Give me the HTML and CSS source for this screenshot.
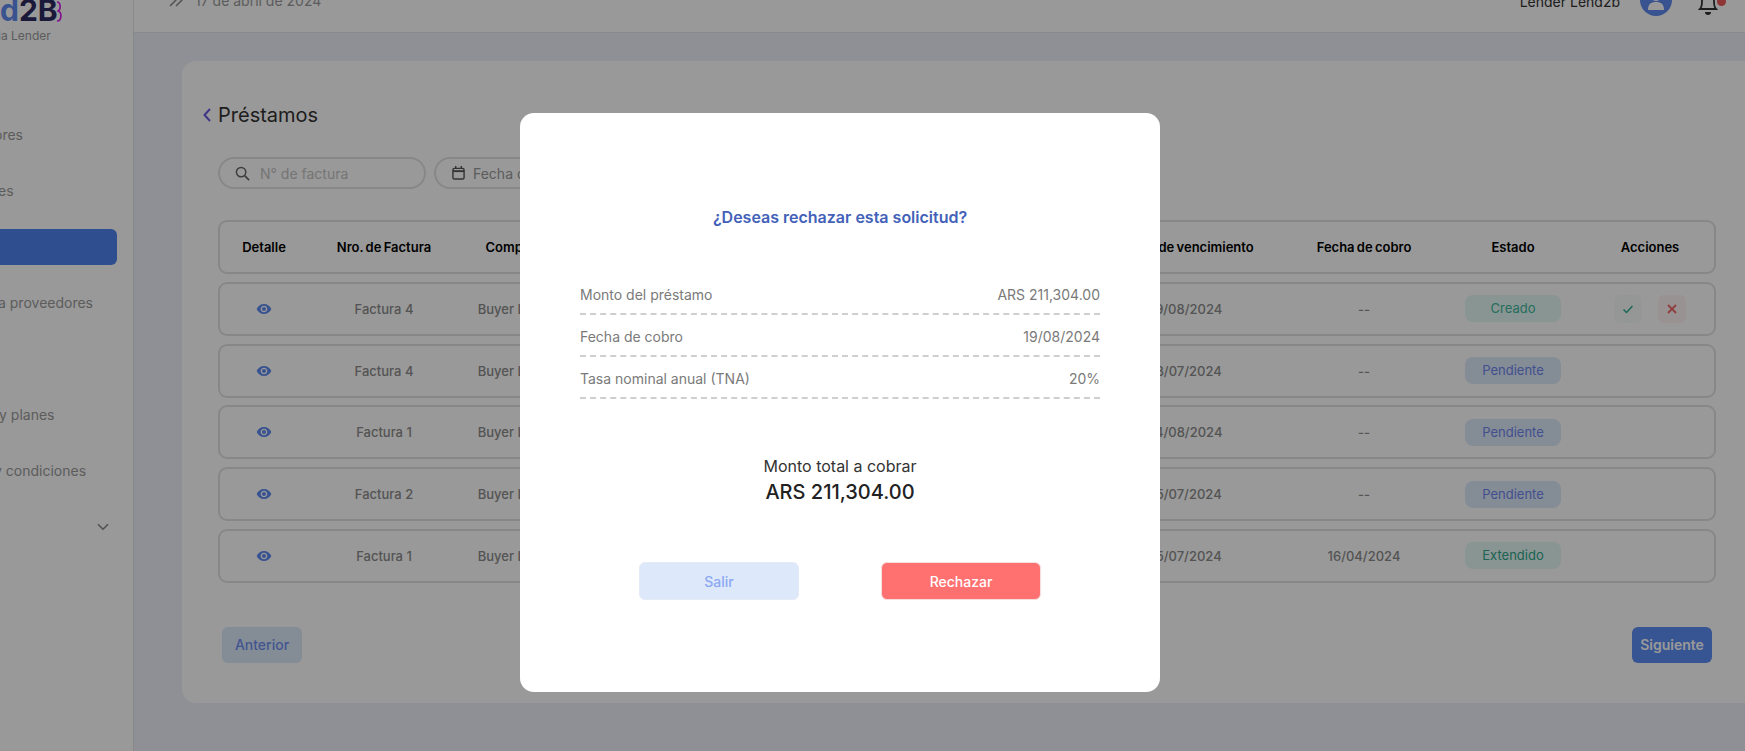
FILE: index.html
```html
<!DOCTYPE html>
<html lang="es">
<head>
<meta charset="utf-8">
<title>Préstamos</title>
<link rel="stylesheet" href="styles.css">
</head>
<body>
<div class="shell">
  <aside class="sidebar">
    <div class="logo"><span class="logo-d">d</span><span class="logo-b">2B</span><svg class="logo-arc" viewBox="0 0 5 21" width="5" height="21"><path d="M0 1c4 0 4 8 1 9c4 1 4 10-1 10" fill="none" stroke="#d21be8" stroke-width="1.6"/></svg></div>
    <div class="logo-sub">la Lender</div>
    <nav class="nav">
      <a class="nav-item nav-a">ores</a>
      <a class="nav-item nav-b">es</a>
      <a class="nav-item nav-active"></a>
      <a class="nav-item nav-b">a proveedores</a>
      <a class="nav-item"></a>
      <a class="nav-item nav-plans">y planes</a>
      <a class="nav-item nav-terms">y condiciones</a>
      <a class="nav-item nav-more"><svg viewBox="0 0 12 8" width="12" height="8"><path d="M1 1.2l5 5 5-5" fill="none" stroke="#888" stroke-width="1.6"/></svg></a>
    </nav>
  </aside>
  <div class="content">
    <header class="topbar">
      <div class="top-left">
        <svg class="top-chev" viewBox="0 0 16 16" width="16" height="16"><path d="M2 14l6-6-6-6M8 14l6-6-6-6" fill="none" stroke="#8a8a8a" stroke-width="1.5"/></svg>
        <span class="top-date">17 de abril de 2024</span>
      </div>
      <div class="top-right">
        <span class="top-user">Lender Lend2b</span>
        <svg class="avatar" viewBox="0 0 32 32" width="32" height="32"><circle cx="16" cy="16" r="16" fill="#5f8bf0"/><circle cx="16" cy="12" r="5" fill="#fff"/><path d="M8 26c0-6 3-8 8-8s8 2 8 8z" fill="#fff"/></svg>
        <div class="bell">
          <svg viewBox="0 0 22 28" width="22" height="28"><path d="M3 20c2-2 2-4 2-8a6 6 0 0 1 12 0c0 4 0 6 2 8z" fill="none" stroke="#333" stroke-width="1.8"/><path d="M8 23h6a3 3 0 0 1-6 0z" fill="#333"/></svg>
          <span class="bell-dot"></span>
        </div>
        <svg class="top-more" viewBox="0 0 12 8" width="12" height="8"><path d="M1 1l5 5 5-5" fill="none" stroke="#444" stroke-width="1.6"/></svg>
      </div>
    </header>
    <main class="main">
      <section class="card">
        <h1 class="title"><svg viewBox="0 0 8 14" width="8" height="14"><path d="M7 1L1.5 7 7 13" fill="none" stroke="#6a5be0" stroke-width="2"/></svg>Préstamos</h1>
        <div class="filters">
          <div class="pill pill-search">
            <svg viewBox="0 0 16 16" width="15" height="15"><circle cx="6.5" cy="6.5" r="5" fill="none" stroke="#666" stroke-width="1.6"/><path d="M10.3 10.3l4.7 4.7" stroke="#666" stroke-width="1.8"/></svg>
            <span>N° de factura</span>
          </div>
          <div class="pill pill-date">
            <svg viewBox="0 0 14 15" width="13" height="14"><rect x="1" y="2.5" width="12" height="11.5" rx="1.5" fill="none" stroke="#555" stroke-width="1.5"/><path d="M1 5.5h12" stroke="#555" stroke-width="2"/><path d="M4 0v3M10 0v3" stroke="#555" stroke-width="1.5"/></svg>
            <span>Fecha de inicio</span>
          </div>
        </div>
        <div class="table">
          <div class="tr th">
            <div>Detalle</div><div>Nro. de Factura</div><div>Comprador</div><div></div><div>Fecha de vencimiento</div><div>Fecha de cobro</div><div>Estado</div><div>Acciones</div>
          </div>
          <div class="tr">
            <div><svg class="eye" viewBox="0 0 24 24" width="16" height="16"><path d="M12 4.5C7 4.5 2.73 7.61 1 12c1.73 4.39 6 7.5 11 7.5s9.27-3.11 11-7.5c-1.73-4.39-6-7.5-11-7.5zM12 17c-2.76 0-5-2.24-5-5s2.24-5 5-5 5 2.24 5 5-2.24 5-5 5zm0-8c-1.66 0-3 1.34-3 3s1.34 3 3 3 3-1.34 3-3-1.34-3-3-3z"/></svg></div>
            <div>Factura 4</div><div>Buyer Lend2b</div><div></div><div>19/08/2024</div><div>--</div>
            <div><span class="badge badge-green">Creado</span></div>
            <div class="actions">
              <span class="act act-ok"><svg viewBox="0 0 12 12" width="12" height="12"><path d="M1.5 6.5l3 3 6-6.5" fill="none" stroke="#2fae93" stroke-width="1.5"/></svg></span>
              <span class="act act-no"><svg viewBox="0 0 12 12" width="12" height="12"><path d="M2 2l8 8M10 2l-8 8" fill="none" stroke="#f0696b" stroke-width="1.8"/></svg></span>
            </div>
          </div>
          <div class="tr">
            <div><svg class="eye" viewBox="0 0 24 24" width="16" height="16"><path d="M12 4.5C7 4.5 2.73 7.61 1 12c1.73 4.39 6 7.5 11 7.5s9.27-3.11 11-7.5c-1.73-4.39-6-7.5-11-7.5zM12 17c-2.76 0-5-2.24-5-5s2.24-5 5-5 5 2.24 5 5-2.24 5-5 5zm0-8c-1.66 0-3 1.34-3 3s1.34 3 3 3 3-1.34 3-3-1.34-3-3-3z"/></svg></div>
            <div>Factura 4</div><div>Buyer Lend2b</div><div></div><div>18/07/2024</div><div>--</div>
            <div><span class="badge badge-blue">Pendiente</span></div><div></div>
          </div>
          <div class="tr">
            <div><svg class="eye" viewBox="0 0 24 24" width="16" height="16"><path d="M12 4.5C7 4.5 2.73 7.61 1 12c1.73 4.39 6 7.5 11 7.5s9.27-3.11 11-7.5c-1.73-4.39-6-7.5-11-7.5zM12 17c-2.76 0-5-2.24-5-5s2.24-5 5-5 5 2.24 5 5-2.24 5-5 5zm0-8c-1.66 0-3 1.34-3 3s1.34 3 3 3 3-1.34 3-3-1.34-3-3-3z"/></svg></div>
            <div>Factura 1</div><div>Buyer Lend2b</div><div></div><div>14/08/2024</div><div>--</div>
            <div><span class="badge badge-blue">Pendiente</span></div><div></div>
          </div>
          <div class="tr">
            <div><svg class="eye" viewBox="0 0 24 24" width="16" height="16"><path d="M12 4.5C7 4.5 2.73 7.61 1 12c1.73 4.39 6 7.5 11 7.5s9.27-3.11 11-7.5c-1.73-4.39-6-7.5-11-7.5zM12 17c-2.76 0-5-2.24-5-5s2.24-5 5-5 5 2.24 5 5-2.24 5-5 5zm0-8c-1.66 0-3 1.34-3 3s1.34 3 3 3 3-1.34 3-3-1.34-3-3-3z"/></svg></div>
            <div>Factura 2</div><div>Buyer Lend2b</div><div></div><div>15/07/2024</div><div>--</div>
            <div><span class="badge badge-blue">Pendiente</span></div><div></div>
          </div>
          <div class="tr">
            <div><svg class="eye" viewBox="0 0 24 24" width="16" height="16"><path d="M12 4.5C7 4.5 2.73 7.61 1 12c1.73 4.39 6 7.5 11 7.5s9.27-3.11 11-7.5c-1.73-4.39-6-7.5-11-7.5zM12 17c-2.76 0-5-2.24-5-5s2.24-5 5-5 5 2.24 5 5-2.24 5-5 5zm0-8c-1.66 0-3 1.34-3 3s1.34 3 3 3 3-1.34 3-3-1.34-3-3-3z"/></svg></div>
            <div>Factura 1</div><div>Buyer Lend2b</div><div></div><div>15/07/2024</div><div>16/04/2024</div>
            <div><span class="badge badge-green badge-ext">Extendido</span></div><div></div>
          </div>
        </div>
        <div class="pager">
          <button class="page-btn page-prev">Anterior</button>
          <button class="page-btn page-next">Siguiente</button>
        </div>
      </section>
    </main>
  </div>
</div>
<div class="overlay">
  <div class="modal">
    <h2 class="modal-title">¿Deseas rechazar esta solicitud?</h2>
    <div class="summary">
      <div class="sum-row"><span>Monto del préstamo</span><span>ARS 211,304.00</span></div>
      <div class="sum-row"><span>Fecha de cobro</span><span>19/08/2024</span></div>
      <div class="sum-row"><span>Tasa nominal anual (TNA)</span><span>20%</span></div>
    </div>
    <div class="total-label">Monto total a cobrar</div>
    <div class="total-value">ARS 211,304.00</div>
    <div class="modal-actions">
      <button class="m-btn m-exit">Salir</button>
      <button class="m-btn m-reject">Rechazar</button>
    </div>
  </div>
</div>
</body>
</html>
```
FILE: styles.css
```css
* { box-sizing: border-box; }
html, body { margin: 0; height: 100%; overflow: hidden; }
body { font-family: Inter, "Noto Sans", sans-serif; background: #eef0f8; color: #333; }
.shell { display: flex; width: 1752px; height: 783px; margin-top: -32px; }

.sidebar { width: 134px; flex: none; background: #fff; border-right: 1px solid #e2e4ea; padding: 25px 16px 0 0; overflow: hidden; }
.logo { display: flex; align-items: center; height: 34px; font-size: 30px; font-weight: 700; line-height: 34px; }
.logo-d { color: #5f8bf0; }
.logo-b { color: #2c2a60; }
.logo-arc { margin-top: 3px; margin-left: -1px; }
.logo-sub { font-size: 12px; line-height: 16px; margin: 1px 0 0 -2px; color: #9a9a9a; }
.nav { display: flex; flex-direction: column; gap: 20px; margin-top: 73px; }
.nav-item { display: flex; align-items: center; height: 36px; padding-bottom: 2px; font-size: 14px; color: #9a9a9a; white-space: nowrap; }
.nav-a { margin-left: -6px; }
.nav-b { margin-left: -2px; }
.nav-active { background: #4f83f1; border-radius: 0 6px 6px 0; }
.nav-plans { margin-left: -1px; }
.nav-terms { margin-left: -6px; }
.nav-more { justify-content: flex-end; padding-right: 8px; padding-bottom: 0; }

.content { flex: 1; min-width: 0; display: flex; flex-direction: column; }
.topbar { display: flex; justify-content: space-between; align-items: center; height: 65px; flex: none; background: #fff; border-bottom: 1px solid #e2e4ea; padding: 0 0 0 34px; }
.top-left, .top-right { display: flex; align-items: center; }
.top-date { margin-left: 11px; font-size: 14px; color: #9a9a9a; }
.top-chev { flex: none; }
.top-user { font-size: 14px; color: #333; margin-top: 2px; }
.avatar { margin-left: 20px; }
.bell { position: relative; margin-left: 25px; width: 22px; height: 28px; margin-top: 6px; }
.bell-dot { position: absolute; top: 8px; right: -7px; width: 9px; height: 9px; border-radius: 50%; background: #f0595b; }
.top-more { margin-left: 21px; margin-top: -12px; }

.main { flex: 1; padding: 28px 0 0 48px; }
.card { height: 642px; background: #fff; border-radius: 14px 0 0 14px; padding: 42px 36px 40px 36px; }
.title { display: flex; align-items: center; gap: 7px; margin: 0 0 0 -15px; font-size: 20px; line-height: 24px; font-weight: 400; color: #333; }
.filters { display: flex; gap: 8px; margin-top: 30px; }
.pill { display: flex; align-items: center; height: 32px; border: 2px solid #e2e2e2; border-radius: 16px; font-size: 14px; color: #c4c4c4; }
.pill-search { width: 208px; padding-left: 15px; gap: 10px; }
.pill-date { width: 260px; padding-left: 16px; gap: 8px; color: #9a9a9a; }

.table { display: flex; flex-direction: column; gap: 7.75px; margin-top: 31px; }
.tr { display: grid; grid-template-columns: 88px 152px 122px 1fr 204px 152px 146px 128px; align-items: center; height: 54px; border: 2px solid #e2e2e2; border-radius: 9px; font-size: 13px; font-weight: 500; color: #8c8c8c; text-align: center; white-space: nowrap; }
.th { font-size: 13px; font-weight: 600; word-spacing: -1px; color: #000; }
.eye { display: block; margin: 0 auto; fill: #5f8bf0; }
.badge { display: inline-block; width: 96px; height: 27px; line-height: 27px; border-radius: 8px; font-weight: 400; }
.badge-green { background: #e4f8f3; color: #3eb79d; }
.badge-ext { color: #2fa58c; }
.badge-blue { background: #dde9fb; color: #6f86ec; }
.actions { display: flex; gap: 16px; justify-content: center; }
.act { display: flex; align-items: center; justify-content: center; width: 28px; height: 28px; border-radius: 6px; }
.act-ok { background: #f7fcf9; }
.act-no { background: #fff3f3; }

.pager { display: flex; justify-content: space-between; padding: 0 4px; margin-top: 44px; }
.page-btn { width: 80px; height: 36px; border: 0; border-radius: 6px; font: 500 14px Inter, sans-serif; }
.page-prev { background: #dde9fb; color: #6f8ff0; }
.page-next { background: #5c8cf5; color: #fff; font-weight: 600; }

.overlay { position: fixed; inset: 0; background: rgba(0, 0, 0, .4); }
.modal { position: absolute; left: 520px; top: 113px; width: 640px; height: 579px; background: #fff; border-radius: 14px; padding: 94px 60px 0; display: flex; flex-direction: column; align-items: stretch; }
.modal-title { margin: 0; font-size: 16px; line-height: 20px; font-weight: 600; color: #4361b8; text-align: center; }
.summary { margin-top: 46px; }
.sum-row { display: flex; justify-content: space-between; padding: 12px 0 8px; border-bottom: 2px dashed #cfcfcf; font-size: 14px; line-height: 20px; color: #7a7a7a; }
.total-label { margin-top: 57px; font-size: 16px; line-height: 20px; color: #333; text-align: center; }
.total-value { margin-top: 4px; font-size: 20px; line-height: 24px; font-weight: 500; color: #222; text-align: center; }
.modal-actions { display: flex; justify-content: center; gap: 82px; margin-top: 58px; }
.m-btn { width: 160px; height: 38px; border-radius: 6px; font: 500 14px Inter, sans-serif; }
.m-exit { background: #dde9fb; border: 1px solid #e4ebf6; color: #8da8f2; }
.m-reject { background: #ff7070; border: 1px solid #f6dede; color: #fff; }
```
